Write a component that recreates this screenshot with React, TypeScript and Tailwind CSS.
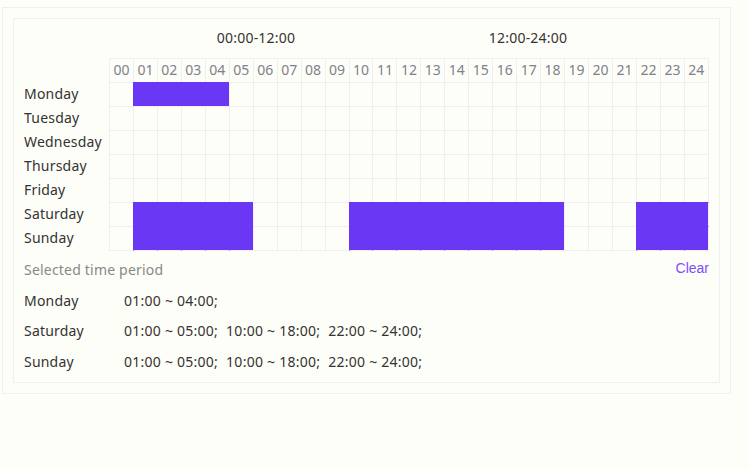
import React from 'react'

const days = ['Monday', 'Tuesday', 'Wednesday', 'Thursday', 'Friday', 'Saturday', 'Sunday']
const hours = Array.from({ length: 25 }, (_, i) => String(i).padStart(2, '0'))

// selected hour columns per day (index = column)
const weekend = [1, 2, 3, 4, 5, 10, 11, 12, 13, 14, 15, 16, 17, 18, 22, 23, 24]
const selected: Record<string, number[]> = {
  Monday: [1, 2, 3, 4],
  Saturday: weekend,
  Sunday: weekend,
}

const summary = [
  { day: 'Monday', ranges: ['01:00 ~ 04:00;'] },
  { day: 'Saturday', ranges: ['01:00 ~ 05:00;', '10:00 ~ 18:00;', '22:00 ~ 24:00;'] },
  { day: 'Sunday', ranges: ['01:00 ~ 05:00;', '10:00 ~ 18:00;', '22:00 ~ 24:00;'] },
]

function Cell({ on, last, bottom }: { on: boolean; last: boolean; bottom: boolean }) {
  return (
    <div
      className={`w-6 ${bottom ? 'h-[25px] border-b' : 'h-6'} border-l border-t ${last ? 'w-[25px] border-r border-r-[#eeeef3]' : ''} ${
        on ? 'bg-[#6a37f5] border-l-[#6a37f5] border-t-[#6a37f5]' : 'border-[#eeeef3]'
      } ${bottom ? 'border-b-[#eeeef3]' : ''}`}
    />
  )
}

export default function App() {
  return (
    <div className="min-h-screen bg-[#fefef8] pt-[7px] pl-[2px] text-[14px] tracking-[0.2px] text-[#333]" style={{ fontFamily: '"Noto Sans", "Open Sans", sans-serif' }}>
      <div className="w-[729px] border border-[#efeff2] p-[10px]">
        <div className="border border-[#efeff2] px-[10px] pb-[10px]">
          <div className="flex h-[39px] items-center pb-[2px]">
            <div className="w-[85px] shrink-0" />
            <div className="w-[294px] text-center">00:00-12:00</div>
            <div className="w-[250px] text-center">12:00-24:00</div>
          </div>

          <div className="flex">
            <div className="w-[85px] shrink-0" />
            {hours.map((h, i) => (
              <div
                key={h}
                className={`flex h-6 w-6 items-center justify-center border-l border-t border-[#eeeef3] pb-[2px] tracking-normal text-[#7d818c] ${i === 24 ? 'w-[25px] border-r' : ''}`}
              >
                {h}
              </div>
            ))}
          </div>

          {days.map((d, r) => {
            const sel = selected[d] || []
            return (
              <div key={d} className="flex">
                <div className="flex w-[85px] shrink-0 items-center pb-[2px]">{d}</div>
                {hours.map((h, i) => (
                  <Cell key={h} on={sel.includes(i)} last={i === 24} bottom={r === days.length - 1} />
                ))}
              </div>
            )
          })}

          <div className="mt-[9px] flex h-[19px] items-center justify-between">
            <span className="-mt-[1px] text-[#888]">Selected time period</span>
            <span className="-mt-[3px] tracking-normal text-[#7c4dff]" style={{ fontFamily: '"Liberation Sans", sans-serif' }}>Clear</span>
          </div>

          <div className="mt-[12px] flex flex-col gap-[10.5px]">
            {summary.map((s) => (
              <div key={s.day} className="flex h-5 items-center pb-[2px]">
                <div className="w-[100px] shrink-0">{s.day}</div>
                <div className="flex gap-[8px] tracking-[0.25px]">
                  {s.ranges.map((t) => (
                    <span key={t}>{t}</span>
                  ))}
                </div>
              </div>
            ))}
          </div>
        </div>
      </div>
    </div>
  )
}
